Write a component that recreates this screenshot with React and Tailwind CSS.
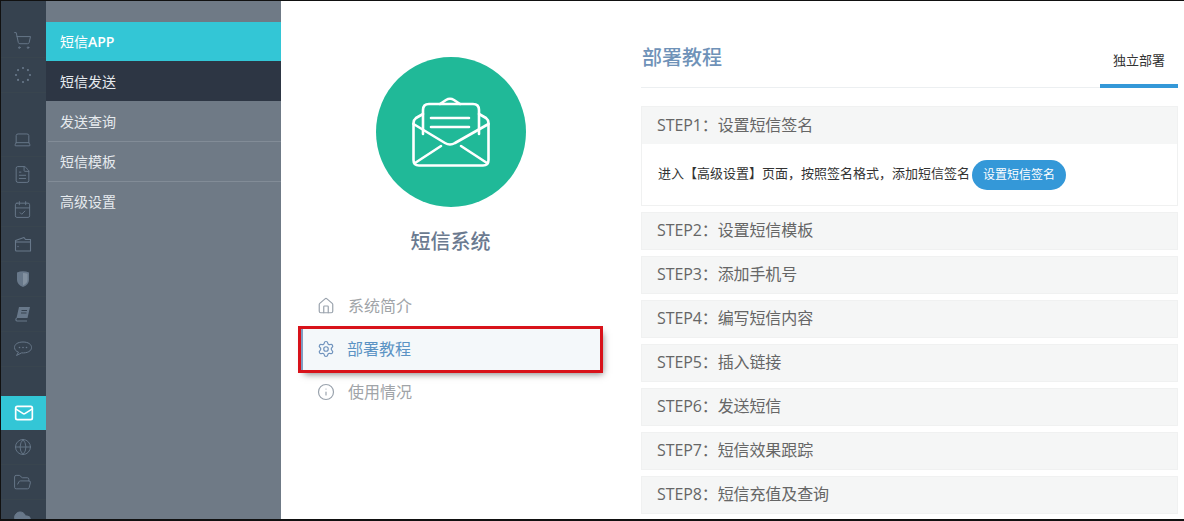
import {
  CalendarCheck,
  Cloud,
  FileText,
  FolderOpen,
  Globe,
  House,
  Info,
  Laptop,
  Mail,
  Settings,
  ShoppingCart,
} from "lucide-react";

const railColor = "#68788a";

function DotsIcon() {
  const dots = [0, 45, 90, 135, 180, 225, 270, 315];
  return (
    <svg width="20" height="20" viewBox="0 0 20 20" fill={railColor}>
      {dots.map((a) => (
        <circle
          key={a}
          cx={10 + 7 * Math.cos((a * Math.PI) / 180)}
          cy={10 + 7 * Math.sin((a * Math.PI) / 180)}
          r="1.1"
        />
      ))}
    </svg>
  );
}

function FolderIcon() {
  return (
    <svg width="20" height="20" viewBox="0 0 20 20" fill="none" stroke={railColor} strokeWidth="1.1" strokeLinejoin="round">
      <path d="M2.5 6.5 L11 3.5 L12.5 5.5 H17.5 V17 H3.5 Q2.5 17 2.5 16 Z" />
      <path d="M2.5 8 H17.5" />
      <circle cx="5" cy="12.5" r="0.7" fill={railColor} stroke="none" />
    </svg>
  );
}

function ShieldIcon() {
  return (
    <svg width="20" height="20" viewBox="0 0 20 20" fill="none">
      <path d="M4 3.5 Q10 1 16 3.5 V11 Q16 15.5 10 18 Q4 15.5 4 11 Z" fill={railColor} />
      <path d="M10 4 Q12.5 4 14.5 4.8 V11 Q14.5 14.5 10 16.4 Z" fill="#8391a0" />
    </svg>
  );
}

function BookIcon() {
  return (
    <svg width="20" height="20" viewBox="0 0 20 20" fill="none">
      <path d="M6 3 H17 L14.5 14 H3.5 Z" fill={railColor} />
      <path d="M3.5 14 Q2 16.5 4 17 H14" stroke={railColor} strokeWidth="1.1" />
      <path d="M8.5 6.5 H14 M8 9 H13.5" stroke="#36424f" strokeWidth="1" />
    </svg>
  );
}

function ChatIcon() {
  return (
    <svg width="20" height="20" viewBox="0 0 20 20" fill="none" stroke={railColor} strokeWidth="1">
      <path d="M10 3 C4.5 3 1.5 5.5 1.5 8.5 C1.5 10.8 3.2 12.4 5.5 13.2 L3.5 16.5 L8.5 13.9 C14.5 14.3 18.5 12 18.5 8.5 C18.5 5.5 15.5 3 10 3 Z" />
      <circle cx="6.5" cy="8.5" r="0.8" fill={railColor} stroke="none" />
      <circle cx="10" cy="8.5" r="0.8" fill={railColor} stroke="none" />
      <circle cx="13.5" cy="8.5" r="0.8" fill={railColor} stroke="none" />
    </svg>
  );
}

const LaptopIcon = () => <Laptop size={19} strokeWidth={1.2} color={railColor} />;
const CartIcon = () => <ShoppingCart size={19} strokeWidth={1.2} color={railColor} />;
const FileIcon = () => <FileText size={19} strokeWidth={1.2} color={railColor} />;
const CalendarIcon = () => <CalendarCheck size={19} strokeWidth={1.2} color={railColor} />;
const GlobeIcon = () => <Globe size={18} strokeWidth={1.2} color={railColor} />;
const OpenIcon = () => <FolderOpen size={19} strokeWidth={1.2} color={railColor} />;
const CloudIcon = () => <Cloud size={19} strokeWidth={1.2} color={railColor} fill={railColor} />;

const topIcons = [CartIcon, DotsIcon];
const midIcons = [LaptopIcon, FileIcon, CalendarIcon, FolderIcon, ShieldIcon, BookIcon, ChatIcon];
const bottomIcons = [GlobeIcon, OpenIcon, CloudIcon];

const steps = [
  "STEP2：设置短信模板",
  "STEP3：添加手机号",
  "STEP4：编写短信内容",
  "STEP5：插入链接",
  "STEP6：发送短信",
  "STEP7：短信效果跟踪",
  "STEP8：短信充值及查询",
];

function RailIcon({ Icon }) {
  return (
    <div className="flex h-[35px] items-center justify-center border-b border-[#39454f] pr-[2px]">
      <Icon />
    </div>
  );
}

function EnvelopeLogo() {
  return (
    <svg width="78" height="70" viewBox="0 0 78 70" fill="none" stroke="#fff" strokeWidth="2.6" strokeLinecap="round" strokeLinejoin="round">
      <path d="M11 17 L4 21 Q1.5 23 1.5 26 V63 Q1.5 68.5 7 68.5 H71 Q76.5 68.5 76.5 63 V26 Q76.5 23 74 21 L67 17" />
      <path d="M11 37 V13 Q11 7 17 7 H61 Q67 7 67 13 V37" />
      <path d="M28 7 L34 3 Q38 0.5 42 3 L48 7" />
      <path d="M1.5 27 L33 46 Q38 49 43 46 L76.5 27" />
      <path d="M3 66 L29 49 M75 66 L49 49" />
      <path d="M19 21 H57 M19 30 H57" />
    </svg>
  );
}

function StepHeader({ title }) {
  return (
    <div className="flex h-[38px] items-center border border-[#f0f1f1] bg-[#f5f6f6] pb-[2px] pl-[15px] text-[16px] leading-none tracking-[-0.1px] text-[#666]">
      {title}
    </div>
  );
}

export default function App() {
  return (
    <div
      className="flex h-[521px] w-[1184px] overflow-hidden border-t border-b-2 border-l border-[#111] bg-white"
      style={{ fontFamily: '"Open Sans", "Noto Sans CJK SC", sans-serif' }}
    >
      <aside className="w-[45px] shrink-0 bg-[#36424f] pt-[22px]">
        {topIcons.map((Icon, i) => (
          <RailIcon key={i} Icon={Icon} />
        ))}
        <div className="h-[29px]" />
        {midIcons.map((Icon, i) => (
          <RailIcon key={i} Icon={Icon} />
        ))}
        <div className="h-[29px]" />
        <div className="flex h-[34px] items-center justify-center bg-[#33c6d6]">
          <Mail size={20} strokeWidth={2} className="text-white" />
        </div>
        {bottomIcons.map((Icon, i) => (
          <RailIcon key={i} Icon={Icon} />
        ))}
      </aside>

      <nav className="w-[235px] shrink-0 bg-[#6f7a86] pt-[21px] text-[14px] text-[#e6eaee]">
        <div className="flex h-[39px] items-center bg-[#33c6d6] pl-[14px] text-white">
          短信<span className="font-semibold">APP</span>
        </div>
        <div className="flex h-[40px] items-center bg-[#2d3644] pl-[14px]">短信发送</div>
        <div className="ml-[2px] flex h-[41px] items-center border-b border-[#828c97] pl-[12px]">发送查询</div>
        <div className="ml-[2px] flex h-[40px] items-center border-b border-[#828c97] pl-[12px]">短信模板</div>
        <div className="ml-[2px] flex h-[40px] items-center pb-[2px] pl-[12px]">高级设置</div>
      </nav>

      <section className="flex w-[339px] shrink-0 flex-col items-center pt-[56px]">
        <div className="flex h-[150px] w-[150px] items-center justify-center rounded-full bg-[#20b998]">
          <EnvelopeLogo />
        </div>
        <h1 className="mt-[22px] text-[20px] leading-[26px] font-medium text-[#6b7a90]">短信系统</h1>
        <ul className="mt-[30px] ml-[19px] w-[301px] self-start text-[16px] text-[#a0a4a8]">
          <li className="flex h-[43px] items-center pb-[1px] pl-[17px]">
            <House size={18} strokeWidth={1.6} className="mr-[13px] text-[#9aa3ad]" />
            系统简介
          </li>
          <li className="mx-[1px] my-[1px] flex h-[41px] items-center border-l-2 border-[#7f9cc0] bg-[#f4f8fa] pb-[1px] pl-[14px] text-[#5b93c4] shadow-[3px_4px_7px_rgba(0,0,0,0.5)] outline-3 outline-[#d8121a]">
            <Settings size={18} strokeWidth={1.6} className="mr-[12px] text-[#6f93bd]" />
            部署教程
          </li>
          <li className="flex h-[43px] items-center pb-[1px] pl-[17px]">
            <Info size={18} strokeWidth={1.6} className="mr-[13px] text-[#9aa3ad]" />
            使用情况
          </li>
        </ul>
      </section>

      <main className="ml-[21px] w-[537px]">
        <header className="flex h-[87px] items-start justify-between border-b border-[#eceff1]">
          <h2 className="mt-[43px] ml-[1px] text-[20px] leading-[28px] font-medium text-[#6f92b8]">部署教程</h2>
          <div className="mt-[38px] flex h-[49px] w-[78px] items-center justify-center border-b-4 border-[#3498d8] pb-[1px] text-[13px] text-[#333]">
            独立部署
          </div>
        </header>
        <div className="mt-[18px] flex flex-col gap-[6px]">
          <div className="border border-[#f0f1f1]">
            <div className="flex h-[37px] items-center bg-[#f5f6f6] pb-[1px] pl-[15px] text-[16px] leading-none tracking-[-0.1px] text-[#666]">
              STEP1：设置短信签名
            </div>
            <div className="flex h-[61px] items-center pl-[16px] text-[13px] text-[#333]">
              <span className="pb-[2px]">进入【高级设置】页面，按照签名格式，添加短信签名</span>
              <span className="ml-[2px] flex h-[30px] w-[94px] items-center justify-center rounded-full bg-[#3498d8] text-[12px] text-white">
                设置短信签名
              </span>
            </div>
          </div>
          {steps.map((title) => (
            <StepHeader key={title} title={title} />
          ))}
        </div>
      </main>
    </div>
  );
}
